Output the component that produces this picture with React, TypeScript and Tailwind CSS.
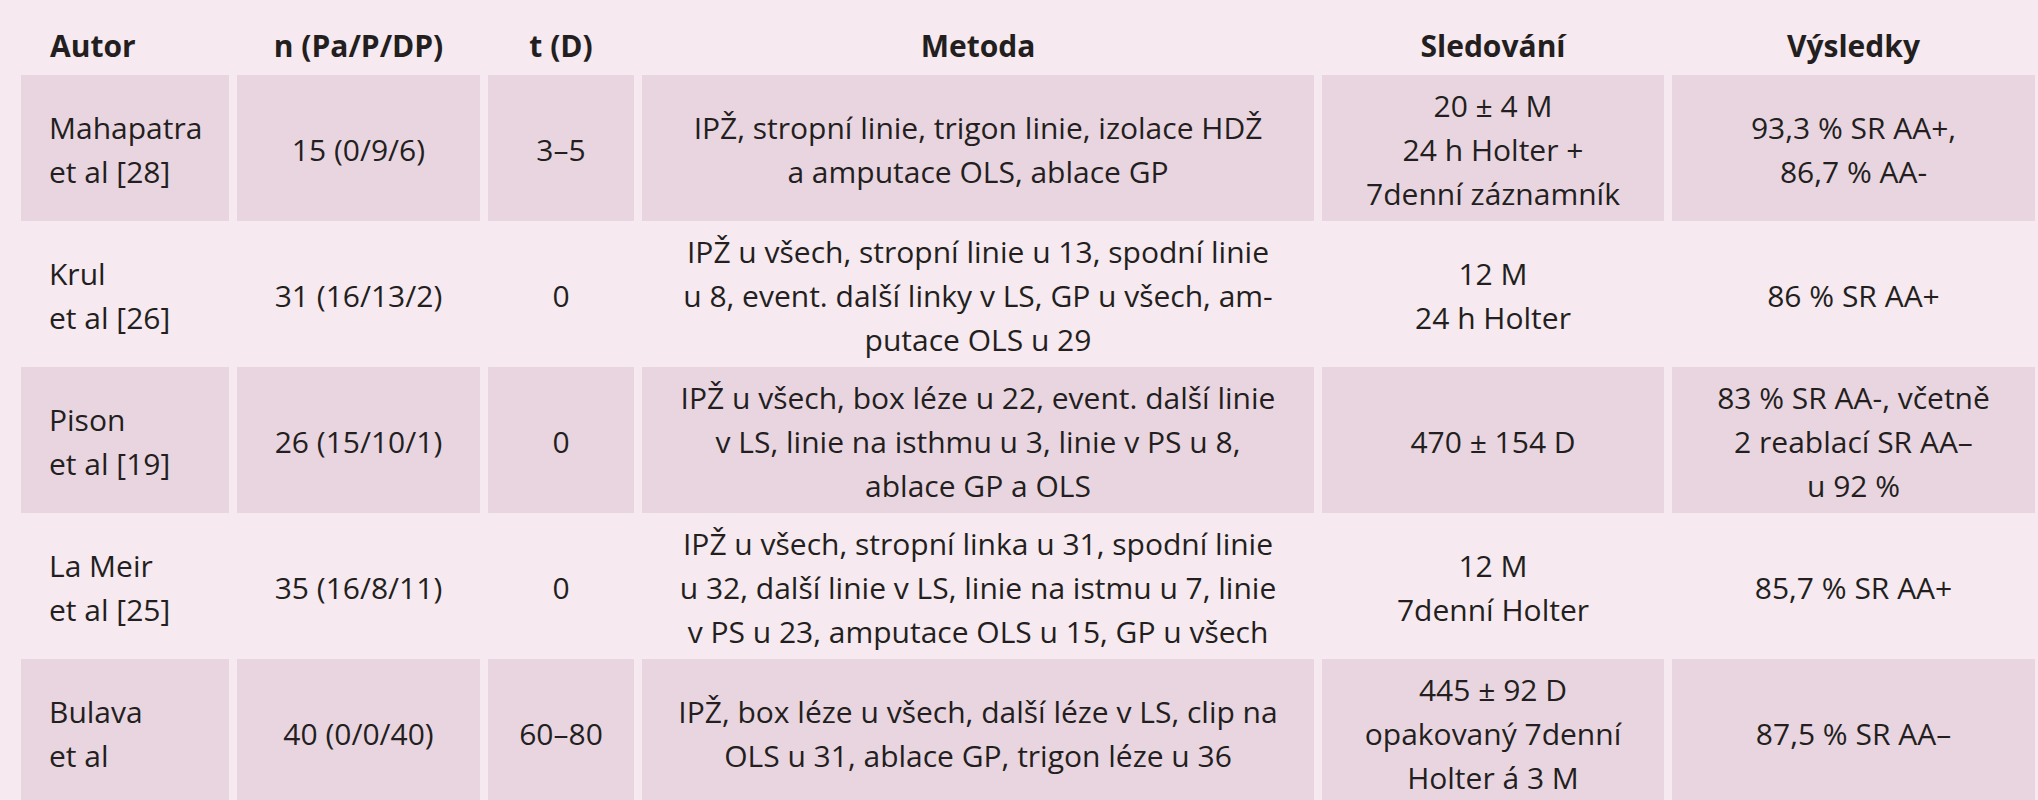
const headers = ["Autor", "n (Pa/P/DP)", "t (D)", "Metoda", "Sledování", "Výsledky"];

type Row = string[][];

const rows: Row[] = [
  [
    ["Mahapatra", "et al [28]"],
    ["15 (0/9/6)"],
    ["3–5"],
    ["IPŽ, stropní linie, trigon linie, izolace HDŽ", "a amputace OLS, ablace GP"],
    ["20 ± 4 M", "24 h Holter +", "7denní záznamník"],
    ["93,3 % SR AA+,", "86,7 % AA-"],
  ],
  [
    ["Krul", "et al [26]"],
    ["31 (16/13/2)"],
    ["0"],
    [
      "IPŽ u všech, stropní linie u 13, spodní linie",
      "u 8, event. další linky v LS, GP u všech, am-",
      "putace OLS u 29",
    ],
    ["12 M", "24 h Holter"],
    ["86 % SR AA+"],
  ],
  [
    ["Pison", "et al [19]"],
    ["26 (15/10/1)"],
    ["0"],
    [
      "IPŽ u všech, box léze u 22, event. další linie",
      "v LS, linie na isthmu u 3, linie v PS u 8,",
      "ablace GP a OLS",
    ],
    ["470 ± 154 D"],
    ["83 % SR AA-, včetně", "2 reablací SR AA–", "u 92 %"],
  ],
  [
    ["La Meir", "et al [25]"],
    ["35 (16/8/11)"],
    ["0"],
    [
      "IPŽ u všech, stropní linka u 31, spodní linie",
      "u 32, další linie v LS, linie na istmu u 7, linie",
      "v PS u 23, amputace OLS u 15, GP u všech",
    ],
    ["12 M", "7denní Holter"],
    ["85,7 % SR AA+"],
  ],
  [
    ["Bulava", "et al"],
    ["40 (0/0/40)"],
    ["60–80"],
    ["IPŽ, box léze u všech, další léze v LS, clip na", "OLS u 31, ablace GP, trigon léze u 36"],
    ["445 ± 92 D", "opakovaný 7denní", "Holter á 3 M"],
    ["87,5 % SR AA–"],
  ],
];

export default function App() {
  return (
    <div
      className="min-h-[800px] w-[2038px] bg-[#f6e9ef] pl-[21px] text-[#231f20]"
      style={{ fontFamily: '"Open Sans", "Noto Sans", sans-serif' }}
    >
      <div className="grid grid-cols-[208px_243px_146px_672px_342px_363px] gap-x-[8px]">
        {/* Header */}
        {headers.map((h, i) => (
          <div
            key={h}
            className={`flex h-[75px] items-center pt-[17px] text-[30px] leading-[36px] font-bold ${
              i === 0 ? "justify-start pl-[29px]" : "justify-center"
            }`}
          >
            {h}
          </div>
        ))}

        {/* Body rows, every other one shaded */}
        {rows.map((row, r) =>
          row.map((cell, c) => (
            <div
              key={`${r}-${c}`}
              className={`flex h-[146px] flex-col justify-center pt-[4px] text-[30px] leading-[44px] ${
                c === 0 ? "items-start pl-[28px]" : "items-center text-center"
              } ${r % 2 === 0 ? "bg-[#e9d5e0]" : ""}`}
            >
              {cell.map((line) => (
                <span key={line} className="whitespace-nowrap">
                  {line}
                </span>
              ))}
            </div>
          ))
        )}
      </div>
    </div>
  );
}
